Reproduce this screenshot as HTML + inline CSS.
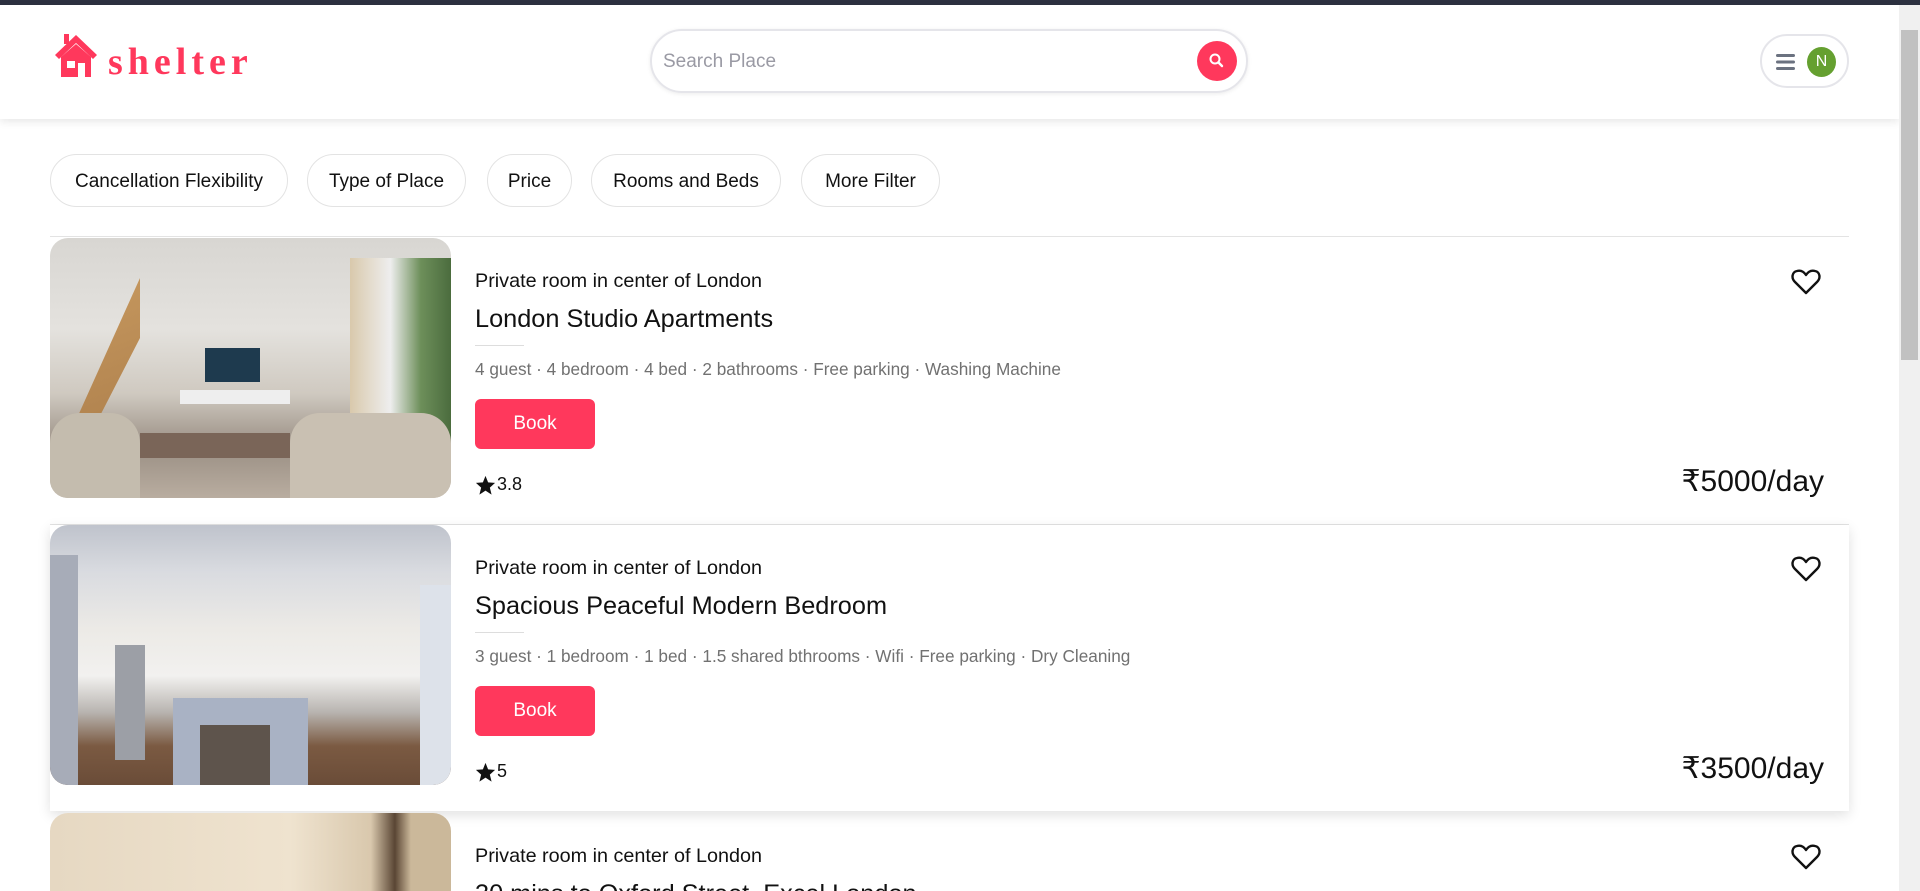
<!DOCTYPE html>
<html><head><meta charset="utf-8"><style>
*{box-sizing:border-box;margin:0;padding:0}
html,body{width:1920px;height:891px;overflow:hidden}
body{background:#fff;font-family:"Liberation Sans",Arial,sans-serif;color:#111;position:relative}
.topbar{position:absolute;left:0;top:0;width:1920px;height:5px;background:#2d3140}
.header{position:absolute;left:0;top:5px;width:1899px;height:114px;background:#fff;box-shadow:0 3px 8px rgba(0,0,0,.09);z-index:2}
.logo{position:absolute;left:53px;top:27px}
.logotext{position:absolute;left:108px;top:35px;font-family:"Liberation Serif",serif;font-weight:bold;font-size:38px;letter-spacing:5px;color:#ff385c}
.search{position:absolute;left:650px;top:24px;width:598px;height:64px;border:2px solid #e5e5ea;border-radius:32px;box-shadow:0 1px 4px rgba(0,0,0,.08)}
.search span{position:absolute;left:11px;top:20px;font-size:19px;color:#9a9aa4}
.sbtn{position:absolute;right:9px;top:10px;width:40px;height:40px;border-radius:50%;background:#ff385c}
.menu{position:absolute;left:1760px;top:29px;width:89px;height:54px;border:2px solid #e5e5ea;border-radius:27px}
.av{position:absolute;left:45px;top:11px;width:29px;height:30px;border-radius:50%;background:#65a030;color:#fff;font-size:16px;text-align:center;line-height:30px}
.scroll{position:absolute;left:1899px;top:5px;width:21px;height:886px;background:#f0f0f0;z-index:3}
.thumb{position:absolute;left:2px;top:25px;width:17px;height:330px;background:#c1c1c1}
.pill{position:absolute;top:154px;height:53px;border:1px solid #e3e3e3;border-radius:27px;font-size:19px;line-height:53px;text-align:center;color:#111}
.hr{position:absolute;left:50px;width:1799px;height:1px;background:#e3e3e3}
.card{position:absolute;left:50px;width:1799px;height:287px}
.img{position:absolute;left:0;top:0;width:401px;height:260px;border-radius:18px;overflow:hidden}
.sub{position:absolute;left:425px;top:32px;font-size:19.8px;color:#111}
.title{position:absolute;left:425px;top:67px;font-size:25.3px;color:#111}
.sd{position:absolute;left:425px;top:107px;width:49px;height:1px;background:#ddd}
.am{position:absolute;left:425px;top:121px;font-size:17.2px;color:#717171}
.book{position:absolute;left:425px;top:161px;width:120px;height:50px;border-radius:6px;background:#ff385c;color:#fff;font-size:19px;text-align:center;line-height:50px}
.rate{position:absolute;left:425px;top:236px;font-size:18px;color:#111;display:flex;align-items:center;gap:1px}
.heart{position:absolute;left:1741px;top:30px}
.price{position:absolute;right:25px;top:226px;font-size:30px;color:#111}
</style></head><body>
<div class="topbar"></div>
<div class="header">
 <svg class="logo" width="46" height="46" viewBox="0 0 46 46"><path d="M23 3 L44 23 L40 27 L23 11 L6 27 L2 23 Z" fill="#ff385c"/><rect x="11" y="2" width="5" height="10" fill="#ff385c"/><path d="M8 25 L23 12 L38 25 L38 45 L8 45 Z" fill="#ff385c"/><rect x="14" y="29" width="8" height="7" fill="#fff"/><rect x="25" y="31" width="7" height="14" fill="#fff"/></svg>
 <div class="logotext">shelter</div>
 <div class="search"><span>Search Place</span><div class="sbtn"><svg width="40" height="40" viewBox="0 0 40 40"><circle cx="18" cy="18" r="4.5" fill="none" stroke="#fff" stroke-width="2"/><line x1="21.5" y1="21.5" x2="25" y2="25" stroke="#fff" stroke-width="2.4" stroke-linecap="round"/></svg></div></div>
 <div class="menu"><svg style="position:absolute;left:14px;top:17px" width="20" height="18" viewBox="0 0 20 18"><rect y="1" width="19" height="3" rx="1.5" fill="#6b7280"/><rect y="7.5" width="19" height="3" rx="1.5" fill="#6b7280"/><rect y="14" width="19" height="3" rx="1.5" fill="#6b7280"/></svg><div class="av">N</div></div>
</div>
<div class="scroll"><div class="thumb"></div></div>

<div class="pill" style="left:50px;width:238px">Cancellation Flexibility</div>
<div class="pill" style="left:307px;width:159px">Type of Place</div>
<div class="pill" style="left:487px;width:85px">Price</div>
<div class="pill" style="left:591px;width:190px">Rooms and Beds</div>
<div class="pill" style="left:801px;width:139px">More Filter</div>
<div class="hr" style="top:236px"></div>

<div class="card" style="top:238px">
 <div class="img" style="background:linear-gradient(180deg,#d8d6d2 0%,#e4e2de 35%,#cfc9c0 60%,#9a8f84 80%,#b9ada0 100%)">
  <div style="position:absolute;left:0;top:40px;width:90px;height:200px;background:linear-gradient(160deg,#c89a60,#a87a48);clip-path:polygon(0 100%,100% 0,100% 30%,20% 100%)"></div>
  <div style="position:absolute;left:155px;top:110px;width:55px;height:34px;background:#1e3a4e"></div>
  <div style="position:absolute;left:130px;top:152px;width:110px;height:14px;background:#eee"></div>
  <div style="position:absolute;left:300px;top:20px;width:101px;height:200px;background:linear-gradient(90deg,#d9c9ac,#eee 40%,#6d8f5a 70%,#4b6c3e)"></div>
  <div style="position:absolute;left:0;top:175px;width:90px;height:85px;background:#c4bcae;border-radius:30px 30px 0 0"></div>
  <div style="position:absolute;left:240px;top:175px;width:161px;height:85px;background:#c9c0b2;border-radius:30px 30px 0 0"></div>
  <div style="position:absolute;left:90px;top:195px;width:150px;height:25px;background:#7a6558"></div>
 </div>
 <div class="sub">Private room in center of London</div>
 <div class="title">London Studio Apartments</div>
 <div class="sd"></div>
 <div class="am">4 guest · 4 bedroom · 4 bed · 2 bathrooms · Free parking · Washing Machine</div>
 <div class="book">Book</div>
 <div class="rate"><svg width="21" height="20" viewBox="0 0 24 23"><path d="M12 1 L15 8.5 L23 9 L17 14.5 L19 22.5 L12 18 L5 22.5 L7 14.5 L1 9 L9 8.5 Z" fill="#111"/></svg>3.8</div>
 <svg class="heart" width="30" height="28" viewBox="0 0 30 28"><path d="M15 25 L4 14 C0 10 1 4 6 3 C10 2 13 4 15 7 C17 4 20 2 24 3 C29 4 30 10 26 14 Z" fill="none" stroke="#111" stroke-width="2.4" stroke-linejoin="round"/></svg>
 <div class="price">₹5000/day</div>
</div>
<div class="hr" style="top:524px"></div>

<div class="card" style="top:525px;height:286px;box-shadow:0 4px 12px rgba(0,0,0,.12)">
 <div class="img" style="background:linear-gradient(180deg,#bfc3cc 0%,#d9dbe0 18%,#eceae6 40%,#f2f1ef 58%,#b8b4b0 72%,#7b5a42 85%,#6a4c38 100%)">
  <div style="position:absolute;left:0;top:30px;width:28px;height:230px;background:#a7acb8"></div>
  <div style="position:absolute;left:65px;top:120px;width:30px;height:115px;background:#9c9fa6"></div>
  <div style="position:absolute;left:123px;top:173px;width:135px;height:90px;background:#a9b2c4"></div>
  <div style="position:absolute;left:150px;top:200px;width:70px;height:60px;background:#5e544c"></div>
  <div style="position:absolute;left:370px;top:60px;width:31px;height:200px;background:#dde2ea"></div>
 </div>
 <div class="sub">Private room in center of London</div>
 <div class="title">Spacious Peaceful Modern Bedroom</div>
 <div class="sd"></div>
 <div class="am">3 guest · 1 bedroom · 1 bed · 1.5 shared bthrooms · Wifi · Free parking · Dry Cleaning</div>
 <div class="book">Book</div>
 <div class="rate"><svg width="21" height="20" viewBox="0 0 24 23"><path d="M12 1 L15 8.5 L23 9 L17 14.5 L19 22.5 L12 18 L5 22.5 L7 14.5 L1 9 L9 8.5 Z" fill="#111"/></svg>5</div>
 <svg class="heart" width="30" height="28" viewBox="0 0 30 28"><path d="M15 25 L4 14 C0 10 1 4 6 3 C10 2 13 4 15 7 C17 4 20 2 24 3 C29 4 30 10 26 14 Z" fill="none" stroke="#111" stroke-width="2.4" stroke-linejoin="round"/></svg>
 <div class="price">₹3500/day</div>
</div>

<div class="card" style="top:813px;height:78px;overflow:hidden">
 <div class="img" style="background:linear-gradient(90deg,#e6d8c2 0%,#efe3cf 60%,#d9c8ad 80%,#5a4634 86%,#cbb89a 90%)"></div>
 <div class="sub">Private room in center of London</div>
 <div class="title">30 mins to Oxford Street, Excel London</div>
 <svg class="heart" width="30" height="28" viewBox="0 0 30 28"><path d="M15 25 L4 14 C0 10 1 4 6 3 C10 2 13 4 15 7 C17 4 20 2 24 3 C29 4 30 10 26 14 Z" fill="none" stroke="#111" stroke-width="2.4" stroke-linejoin="round"/></svg>
</div>
</body></html>
